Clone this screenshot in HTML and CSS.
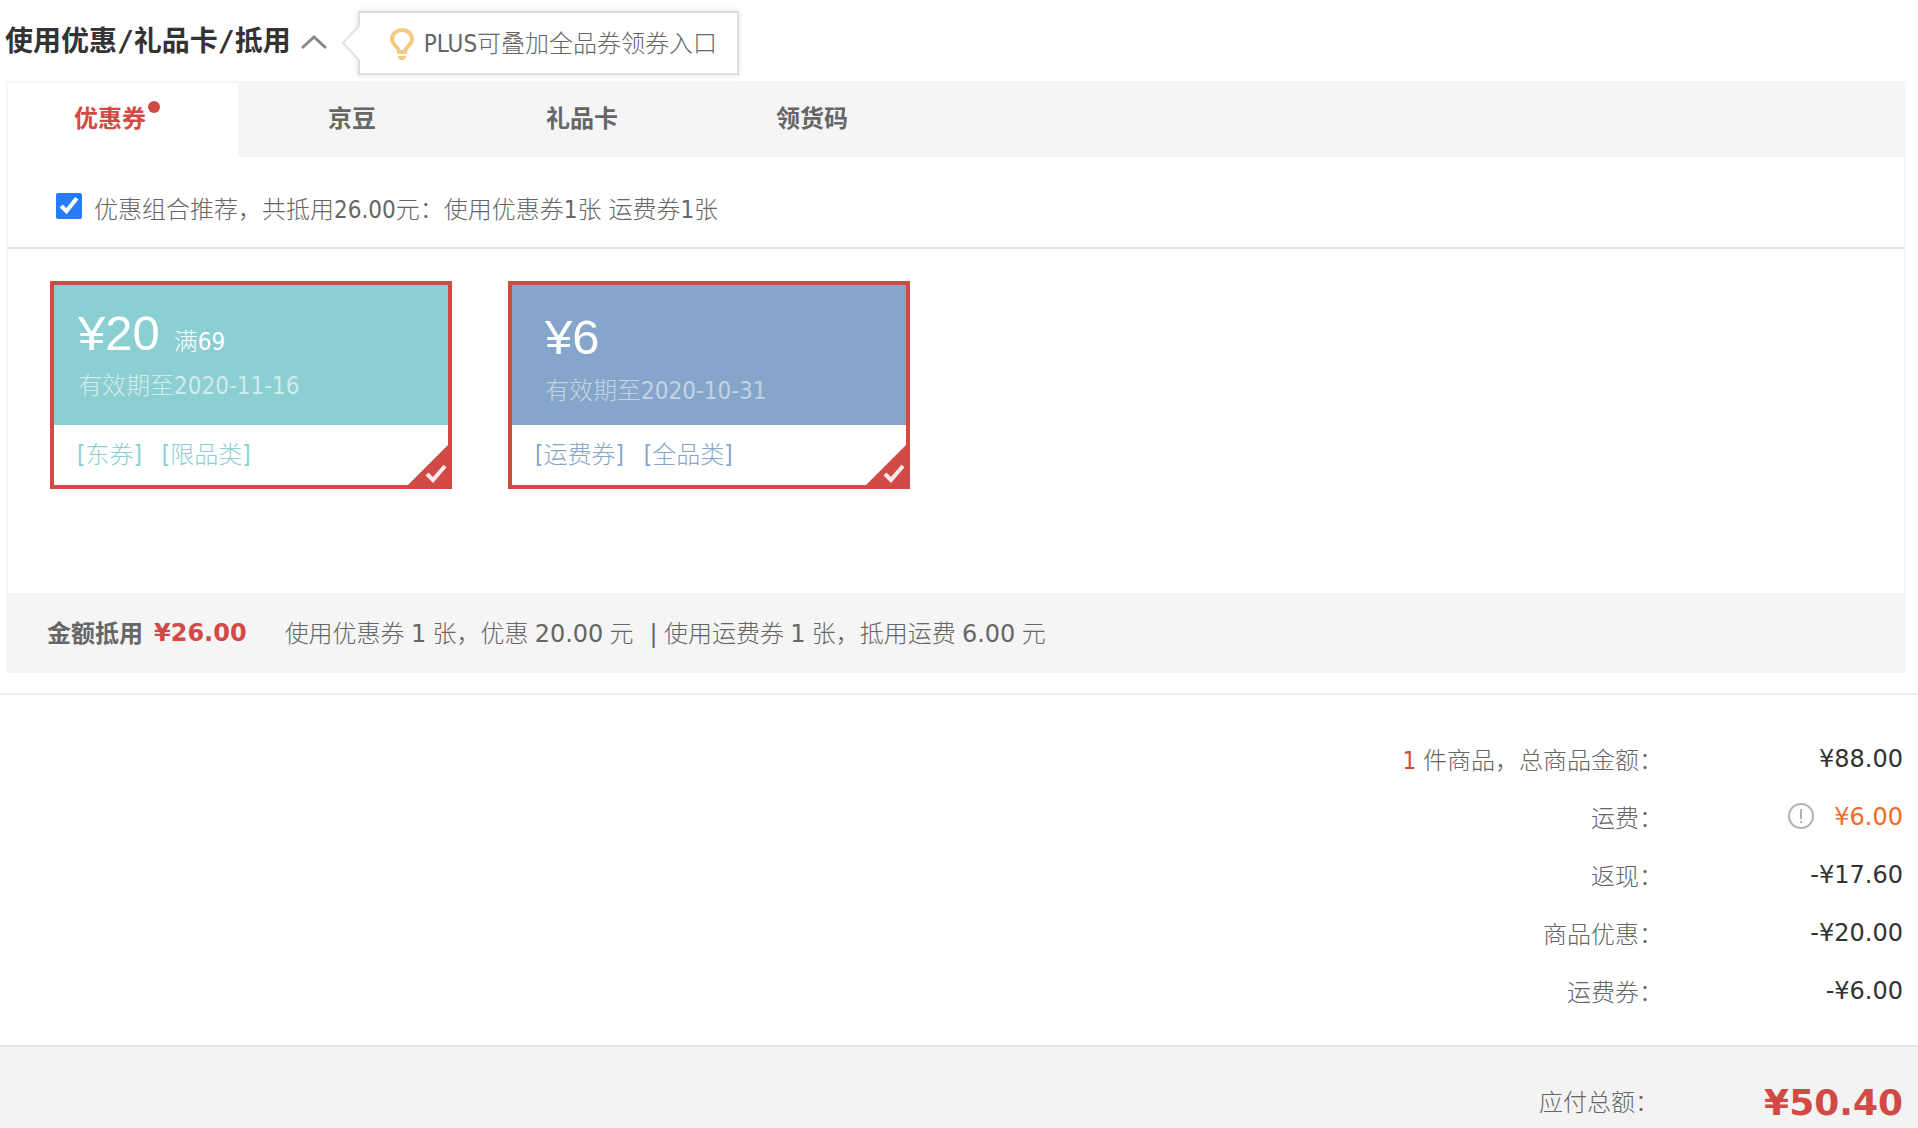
FILE: index.html
```html
<!DOCTYPE html>
<html lang="zh-CN">
<head>
  <meta charset="UTF-8" />
  <meta name="viewport" content="width=device-width, initial-scale=1.0"/>
  <title>使用优惠/礼品卡/抵用</title>
  <link rel="stylesheet" href="styles.css">
</head>
<body>

  <div class="discount-head">
    <h2>使用优惠/礼品卡/抵用</h2>
    <button type="button" class="toggle" aria-label="收起">
      <svg width="28" height="16" viewBox="0 0 28 16"><path d="M2 14 L14 3 L26 14" fill="none" stroke="#888" stroke-width="3"/></svg>
    </button>
    <a href="#" class="plus-tip">
      <svg class="tip-arrow" width="18" height="36" viewBox="0 0 18 36"><path d="M18 0 V36 L16 34 V33 L1 18 L16 3 V2 Z" fill="#fff"/><path d="M17 1 L1 18 L17 35" fill="none" stroke="#e2e2e2" stroke-width="2"/></svg>
      <svg class="bulb" width="24" height="32" viewBox="0 0 24 32"><path d="M9 24 C9 19 2 17 2 11 A10 9 0 0 1 22 11 C22 17 15 19 15 24 Z" fill="none" stroke="#f3cb83" stroke-width="4"/><path d="M8 28 H16 V30 L14 32 H10 L8 30 Z" fill="#f3cb83"/></svg>
      PLUS可叠加全品券领券入口
    </a>
  </div>

  <div class="panel">
    <div class="tabs">
      <button type="button" class="tab active"><span class="tab-name">优惠券<i class="dot"></i></span></button>
      <button type="button" class="tab">京豆</button>
      <button type="button" class="tab">礼品卡</button>
      <button type="button" class="tab">领货码</button>
    </div>

    <div class="recommend">
      <input type="checkbox" id="recommend" checked />
      <label for="recommend">优惠组合推荐，共抵用26.00元：使用优惠券1张 运费券1张</label>
    </div>

    <div class="coupons">
      <div class="coupon coupon-east">
        <div class="coupon-top">
          <div class="price"><span class="amount">¥20</span><span class="limit">满69</span></div>
          <div class="expire">有效期至2020-11-16</div>
        </div>
        <div class="coupon-type"><span>[东券]</span><span>[限品类]</span></div>
        <svg class="checked" width="48" height="48" viewBox="0 0 48 48"><path d="M48 0 V48 H0 Z" fill="#d24a45"/><path d="M23 33 L29 39 L41 25" fill="none" stroke="#fff" stroke-opacity="0.9" stroke-width="4"/></svg>
      </div>
      <div class="coupon coupon-freight">
        <div class="coupon-top">
          <div class="price"><span class="amount">¥6</span></div>
          <div class="expire">有效期至2020-10-31</div>
        </div>
        <div class="coupon-type"><span>[运费券]</span><span>[全品类]</span></div>
        <svg class="checked" width="48" height="48" viewBox="0 0 48 48"><path d="M48 0 V48 H0 Z" fill="#d24a45"/><path d="M23 33 L29 39 L41 25" fill="none" stroke="#fff" stroke-opacity="0.9" stroke-width="4"/></svg>
      </div>
    </div>

    <div class="used">
      <strong>金额抵用</strong>
      <strong class="used-money">¥26.00</strong>
      <span>使用优惠券 <em>1</em> 张，优惠 <em>20.00</em> 元</span>
      <span class="used-freight"><em>|</em> 使用运费券 <em>1</em> 张，抵用运费 <em>6.00</em> 元</span>
    </div>
  </div>

  <table class="summary">
    <tr>
      <th scope="row"><em>1</em> 件商品，总商品金额：</th>
      <td>¥88.00</td>
    </tr>
    <tr>
      <th scope="row">运费：</th>
      <td class="freight">
        <svg class="info" width="26" height="26" viewBox="0 0 26 26"><circle cx="13" cy="13" r="12" fill="none" stroke="#b3b3b3" stroke-width="2"/><path d="M13 6 V16 M13 18 V20" stroke="#b3b3b3" stroke-width="2"/></svg>¥6.00
      </td>
    </tr>
    <tr>
      <th scope="row">返现：</th>
      <td>-¥17.60</td>
    </tr>
    <tr>
      <th scope="row">商品优惠：</th>
      <td>-¥20.00</td>
    </tr>
    <tr>
      <th scope="row">运费券：</th>
      <td>-¥6.00</td>
    </tr>
  </table>

  <div class="total">
    <span>应付总额：</span>
    <strong>¥50.40</strong>
  </div>

</body>
</html>
```
FILE: styles.css
```css
* {
  box-sizing: border-box;
  margin: 0;
  padding: 0;
}
body {
  display: flex;
  flex-direction: column;
  min-height: 100vh;
  background: #fff;
  color: #666;
  font-family: 'DejaVu Sans Condensed', 'Noto Sans', 'Noto Sans CJK SC', sans-serif;
  font-size: 24px;
  font-weight: 300;
  line-height: 32px;
}
button {
  border: none;
  background: none;
  font: inherit;
  color: inherit;
  cursor: pointer;
}
a {
  color: inherit;
  text-decoration: none;
}
strong {
  font-weight: bold;
}
em {
  font-style: normal;
  font-weight: normal;
}

/* title */
.discount-head {
  display: flex;
  align-items: center;
  padding: 11px 0 6px 5px;
}
.discount-head h2 {
  padding-bottom: 2px;
  font-family: 'DejaVu Sans Mono', 'Noto Sans CJK SC', sans-serif;
  font-size: 28px;
  font-weight: bold;
  color: #333;
}
.toggle {
  display: flex;
  margin-left: 9px;
  padding-bottom: 3px;
}
.plus-tip {
  position: relative;
  display: flex;
  align-items: center;
  height: 64px;
  margin-left: 30px;
  padding: 2px 20px 0 30px;
  border: 2px solid #ddd;
  background: #fff;
  box-shadow: 0 0 6px rgba(0, 0, 0, 0.12);
}
.tip-arrow {
  position: absolute;
  left: -18px;
  top: 12px;
}
.bulb {
  margin-right: 10px;
}

/* tab panel */
.panel {
  margin: 0 12px 20px 6px;
  border: 2px solid #f5f5f5;
  border-bottom: none;
}
.tabs {
  display: flex;
  background: #f5f5f5;
}
.tab {
  width: 230px;
  height: 74px;
  padding: 0 2px 2px 0;
  font-weight: bold;
}
.tab.active {
  padding-right: 26px;
  background: #fff;
  color: #d24a45;
}
.tab-name {
  position: relative;
}
.dot {
  position: absolute;
  right: -14px;
  top: -4px;
  width: 12px;
  height: 12px;
  border-radius: 50%;
  background: #d24a45;
}
.recommend {
  display: flex;
  align-items: center;
  height: 92px;
  padding: 8px 48px 0;
  border-bottom: 2px solid #e5e5e5;
}
.recommend input {
  width: 26px;
  height: 26px;
  margin-right: 12px;
  accent-color: #277bf8;
}
.recommend label {
  padding-top: 8px;
}

/* coupons */
.coupons {
  display: flex;
  gap: 56px;
  padding: 32px 42px 104px;
}
.coupon {
  position: relative;
  width: 402px;
  border: 4px solid #d24a45;
}
.coupon-top {
  height: 140px;
  padding: 20px 24px;
  color: #fff;
}
.price {
  display: flex;
  align-items: baseline;
  gap: 14px;
  line-height: 56px;
}
.amount {
  font-family: 'Liberation Sans', sans-serif;
  font-size: 49px;
  font-weight: normal;
}
.expire {
  opacity: 0.6;
}
.coupon-type {
  display: flex;
  gap: 20px;
  padding: 14px 23px;
}
.checked {
  position: absolute;
  right: -4px;
  bottom: -4px;
}
.coupon-east .coupon-top {
  background: #8bcfd2;
}
.coupon-east .coupon-type {
  color: #8bcfd2;
}
.coupon-freight .coupon-top {
  padding: 24px 33px;
  background: #85a6ca;
}
.coupon-freight .coupon-type {
  color: #85a6ca;
}
.coupon-freight .expire {
  margin-top: 10px;
  opacity: 0.5;
}

.used {
  display: flex;
  align-items: center;
  height: 80px;
  padding: 0 39px;
  background: #f5f5f5;
  font-family: 'Noto Sans', 'Noto Sans CJK SC', sans-serif;
}
.used em,
.used-money {
  font-family: 'DejaVu Sans', sans-serif;
}
.used-money {
  margin: 0 38px 0 11px;
  color: #d24a45;
}
.used-freight {
  margin-left: 16px;
}

/* order amount */
.summary {
  width: 100%;
  border-top: 2px solid #f0f0f0;
  border-bottom: 2px solid #e5e5e5;
  border-spacing: 0;
  padding: 36px 15px 24px;
}
.summary th {
  height: 58px;
  padding-top: 2px;
  font-weight: 300;
  text-align: right;
}
.summary th em {
  color: #d24a45;
}
.summary td {
  width: 240px;
  padding-bottom: 2px;
  color: #333;
  font-family: 'DejaVu Sans', sans-serif;
  font-weight: normal;
  text-align: right;
}
.summary .freight {
  color: #ef6c26;
}
.info {
  margin-right: 20px;
  vertical-align: -4px;
}

.total {
  display: flex;
  flex: 1;
  justify-content: flex-end;
  padding: 40px 15px 9px;
  background: #f3f3f3;
}
.total strong {
  width: 244px;
  color: #d24a45;
  font-family: 'DejaVu Sans', sans-serif;
  font-size: 36px;
  text-align: right;
}
```
